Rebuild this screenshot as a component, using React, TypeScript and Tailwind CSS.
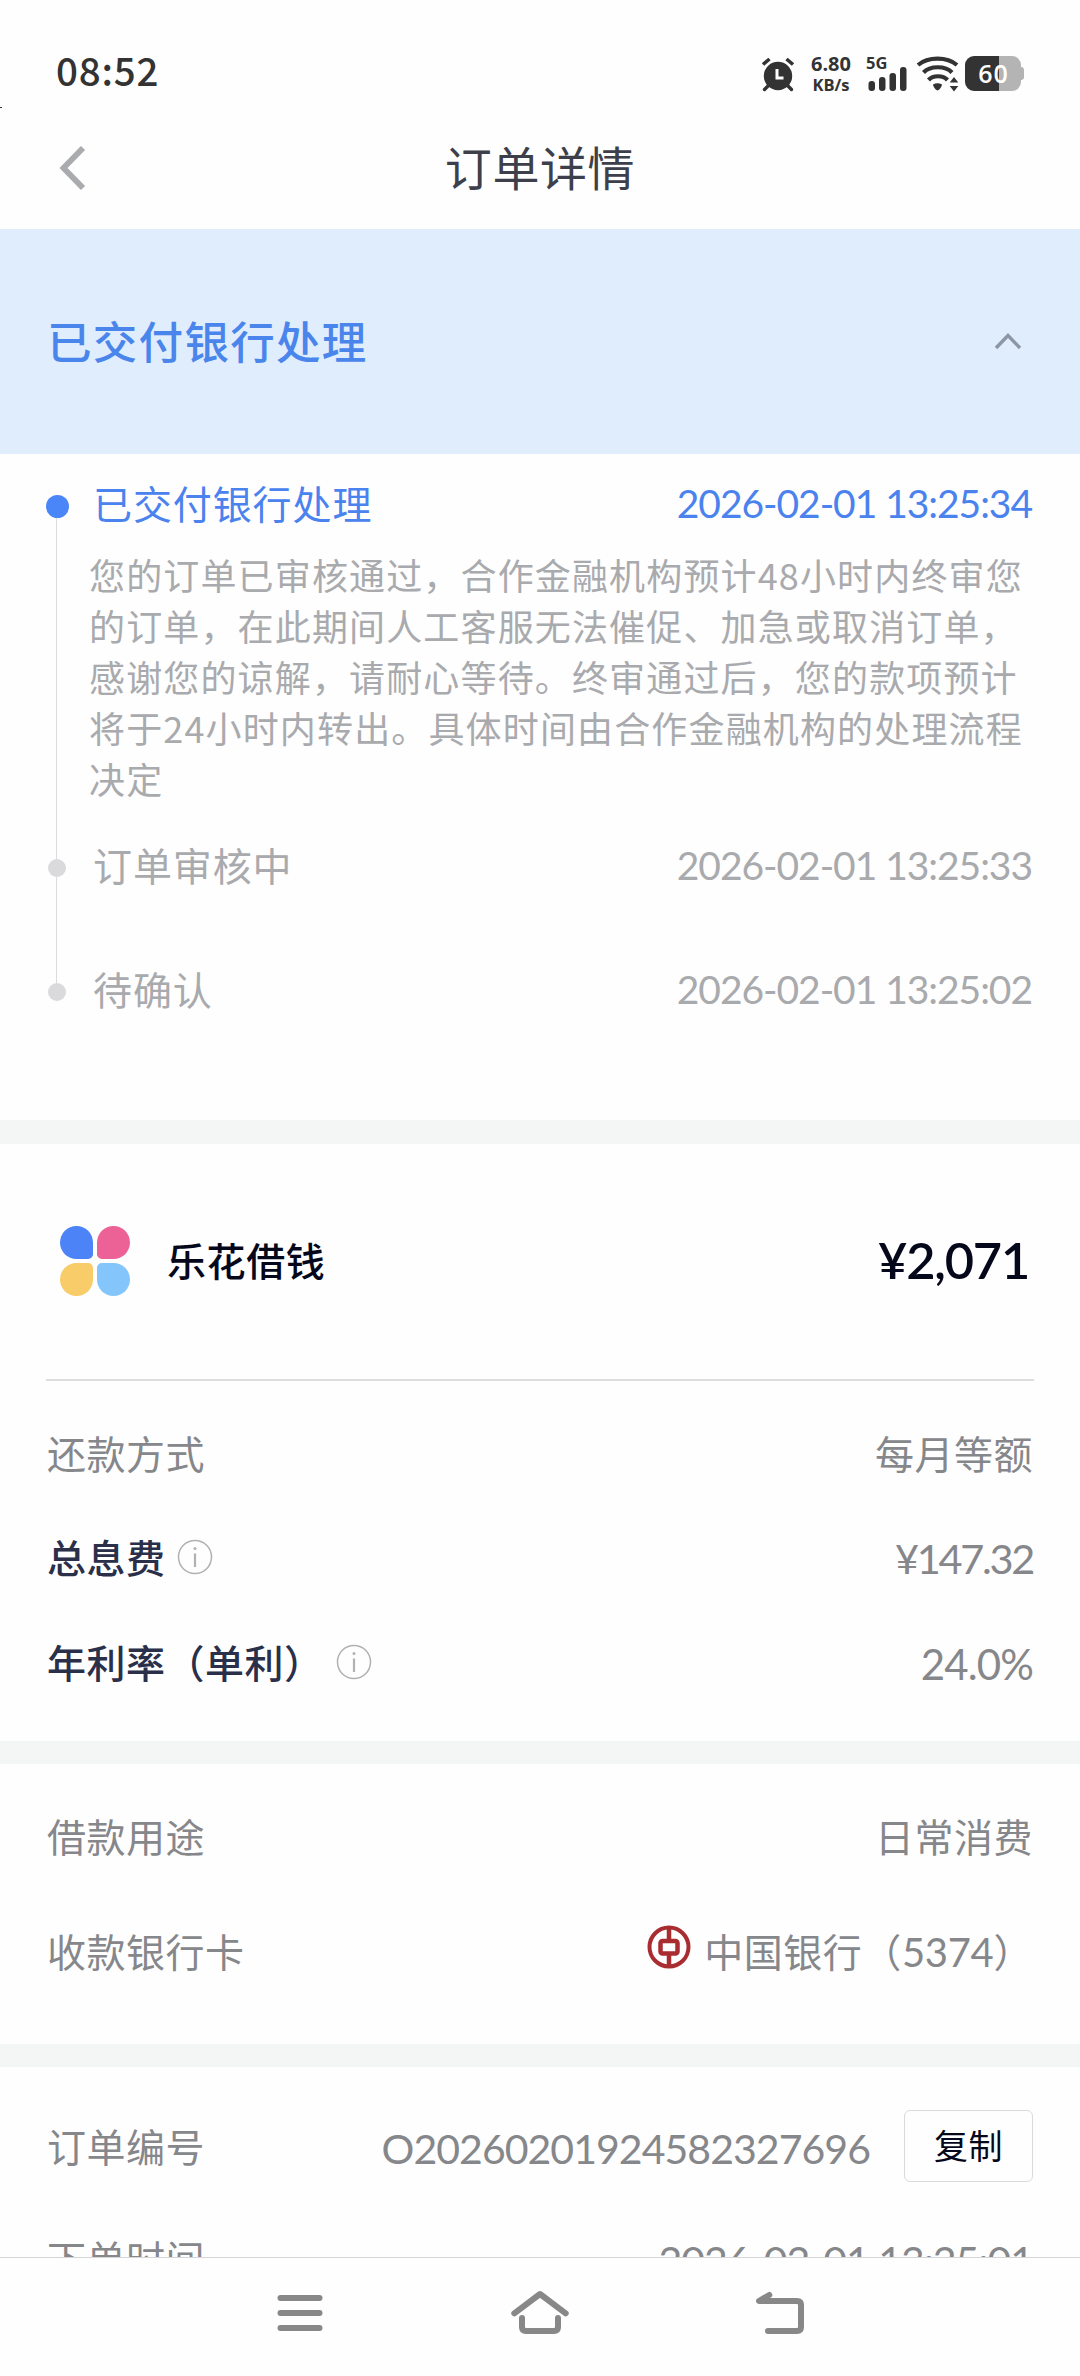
import type { ReactNode } from "react";

function AlarmIcon() {
  return (
    <svg width="34" height="36" viewBox="0 0 34 36" fill="none" stroke="#333" strokeLinecap="round">
      <circle cx="17" cy="20" r="14.2" fill="#333" stroke="none" />
      <path d="M2 8.500 8.500 3M32 8.500 25.500 3" strokeWidth="3.600" strokeLinecap="butt" />
      <path d="M7 30 3.500 33.500M27 30l3.500 3.500" strokeWidth="3.400" />
      <path d="M16 13v9h6.500" stroke="#fff" strokeWidth="3" strokeLinecap="butt" />
    </svg>
  );
}

function SignalIcon() {
  return (
    <svg width="39" height="24" viewBox="0 0 39 24" fill="#333">
      <rect x="0.500" y="14" width="6.500" height="10" rx="3" />
      <rect x="11" y="10" width="6.500" height="14" rx="3" />
      <rect x="21.500" y="6" width="6.500" height="18" rx="3" />
      <rect x="32" y="0" width="6.500" height="24" rx="3" />
    </svg>
  );
}

function WifiIcon() {
  return (
    <svg width="44" height="36" viewBox="0 0 44 36" fill="none" stroke="#333" strokeWidth="4.200">
      <path d="M2 9C12 .5 31 .5 41 9" />
      <path d="M7.500 16.500c6.500-7 22-7 28.500 0" />
      <path d="M12.500 24c4.500-5 14.500-5 19 0" />
      <path d="M17 28.500q4.500-2.500 9 0c0 2-3 6-4.500 6s-4.500-4-4.500-6z" fill="#333" stroke="none" />
      <path d="m38 21 4.300 5.500h-8.600zM38 35.500l4.300-5.500h-8.600z" fill="#333" stroke="none" />
    </svg>
  );
}

function Battery() {
  return (
    <div className="flex items-center">
      <div className="flex h-[35px] w-[56px] items-center justify-center rounded-[9px] bg-linear-to-r from-[#333] from-60% to-[#b4b4b4] to-60% pl-[1px] font-[Open_Sans] text-[25px] leading-none font-semibold tracking-[1px] text-white">
        60
      </div>
      <div className="h-[13px] w-[3px] rounded-r-[3px] bg-[#b4b4b4]" />
    </div>
  );
}

function InfoIcon() {
  return (
    <svg width="36" height="36" viewBox="0 0 36 36" fill="none" stroke="#b0b1b4" strokeWidth="1.500">
      <circle cx="18" cy="18" r="16.500" />
      <path d="M18 14.500v13.500" strokeWidth="2.200" />
      <circle cx="18" cy="9.500" r="1.500" fill="#b0b1b4" stroke="none" />
    </svg>
  );
}

function FlowerLogo() {
  return (
    <div className="grid h-[70px] w-[70px] grid-cols-2 gap-1">
      <i className="rounded-[17px] rounded-br-[5px] bg-[#4c83f6]" />
      <i className="rounded-[17px] rounded-bl-[5px] bg-[#ed6296]" />
      <i className="rounded-[17px] rounded-tr-[5px] bg-[#f8cc68]" />
      <i className="rounded-[17px] rounded-tl-[5px] bg-[#84c6fb]" />
    </div>
  );
}

function BankLogo() {
  return (
    <svg width="44" height="44" viewBox="0 0 44 44" fill="none" stroke="#a92c30">
      <circle cx="22" cy="22" r="19.500" strokeWidth="4" />
      <rect x="13.500" y="16" width="17" height="12.500" rx="2" strokeWidth="4.500" />
      <path d="M22 2v14M22 29v13" strokeWidth="4.500" />
    </svg>
  );
}

type StepProps = { title: string; time: string; active?: boolean; className: string };

function Step({ title, time, active, className }: StepProps) {
  return (
    <div className={`flex h-[60px] items-center justify-between ${active ? "text-[#4a82ee]" : "text-[#a9aaad]"} ${className}`}>
      <div className="flex items-center">
        <div className="mr-[12px] flex w-[48px] justify-center pt-1">
          <div className={active ? "size-[23px] rounded-full bg-[#4a86f7]" : "size-[18px] rounded-full bg-[#dadadc]"} />
        </div>
        <span className="pb-1 text-[39px] tracking-[0.9px]">{title}</span>
      </div>
      <span className="pb-px font-[Lato] text-[39px] tracking-[-1.050px]">{time}</span>
    </div>
  );
}

type RowProps = { label: ReactNode; children: ReactNode; className: string };

function Row({ label, children, className }: RowProps) {
  return (
    <div className={`flex h-[60px] shrink-0 items-center justify-between pr-[47px] pl-[47px] text-[39px] tracking-[0.5px] text-[#86878b] ${className}`}>
      <div className="flex items-center pb-[5px]">{label}</div>
      {children}
    </div>
  );
}

const notice = [
  "您的订单已审核通过，合作金融机构预计48小时内终审您",
  "的订单，在此期间人工客服无法催促、加急或取消订单，",
  "感谢您的谅解，请耐心等待。终审通过后，您的款项预计",
  "将于24小时内转出。具体时间由合作金融机构的处理流程",
  "决定",
];

export default function App() {
  return (
    <div className="flex h-[2376px] w-[1080px] flex-col overflow-hidden bg-[#fefefe] font-['Noto_Sans_CJK_SC',sans-serif] leading-none whitespace-nowrap">
      {/* status bar */}
      <div className="flex h-[107px] shrink-0 items-center justify-between pt-[40px] pr-[56px] pl-[56px] text-[#333]">
        <span className="pb-[9px] text-[38.500px] font-medium tracking-[0.8px]">08:52</span>
        <div className="flex items-center">
          <AlarmIcon />
          <div className="ml-[14px] flex w-[44px] flex-col items-center font-[Open_Sans] font-bold">
            <span className="text-[20px] leading-[21px]">6.80</span>
            <span className="text-[16.500px] leading-[21px]">KB/s</span>
          </div>
          <div className="ml-[13px] flex h-[35px] w-[41px] flex-col justify-between">
            <span className="font-[Open_Sans] text-[16.500px] leading-[13px] font-bold">5G</span>
            <div className="-mt-3 pl-[2px]">
              <SignalIcon />
            </div>
          </div>
          <div className="mr-[5px] ml-[9px]">
            <WifiIcon />
          </div>
          <Battery />
        </div>
      </div>
      <div className="h-px w-[2px] shrink-0 bg-[#333]" />

      {/* title bar */}
      <div className="relative flex h-[121px] shrink-0 items-center justify-center pb-[7px]">
        <svg className="absolute top-[38px] left-[58px]" width="30" height="44" viewBox="0 0 30 44" fill="none" stroke="#a9abae" strokeWidth="5.800">
          <path d="M25 2 5.500 22 25 42" />
        </svg>
        <h1 className="text-[47px] tracking-[0.6px] text-[#3d3f4a]">订单详情</h1>
      </div>

      {/* current state */}
      <div className="flex h-[225px] shrink-0 items-center justify-between bg-[#e0edfd] pr-[58px] pb-[2px] pl-[47px]">
        <h2 className="text-[44.500px] font-medium tracking-[1.300px] text-[#4a85ec]">已交付银行处理</h2>
        <svg width="28" height="18" viewBox="0 0 28 18" fill="none" stroke="#8c96a5" strokeWidth="3.400">
          <path d="M2 16 14 3.500 26 16" />
        </svg>
      </div>

      {/* timeline */}
      <div className="relative h-[666px] shrink-0 pr-[48px] pl-[33px]">
        <div className="absolute top-[60px] left-[56px] h-[478px] w-px bg-[#dcdcde]" />
        <div className="relative">
          <Step active title="已交付银行处理" time="2026-02-01 13:25:34" className="mt-[20px]" />
          <div className="mt-[15px] pl-[56px] text-[36px] leading-[51.100px] tracking-[1.150px] text-[#a9aaad]">
            {notice.map((line) => (
              <p key={line}>{line}</p>
            ))}
          </div>
          <Step title="订单审核中" time="2026-02-01 13:25:33" className="mt-[32px]" />
          <Step title="待确认" time="2026-02-01 13:25:02" className="mt-[64px]" />
        </div>
      </div>

      <div className="h-6 shrink-0 bg-[#f4f6f6]" />

      {/* product */}
      <div className="mx-[46px] flex h-[237px] shrink-0 items-center justify-between border-b-2 border-[#dddde0] pr-[5px] pb-[2px] pl-[14px] text-[#05071a]">
        <div className="flex items-center gap-[37px]">
          <FlowerLogo />
          <span className="pb-[3px] text-[39px] font-medium tracking-[0.6px]">乐花借钱</span>
        </div>
        <span className="font-[Lato] text-[50.500px] font-semibold tracking-[-1.200px]">¥2,071</span>
      </div>

      <Row className="mt-[44px]" label="还款方式">
        <span className="pb-[5px]">每月等额</span>
      </Row>
      <Row
        className="mt-[44px]"
        label={
          <div className="flex items-center gap-[11px] font-medium text-[#2a2f4a]">
            总息费
            <InfoIcon />
          </div>
        }
      >
        <span className="font-[Lato] text-[41.500px] tracking-[-2.300px]">¥147.32</span>
      </Row>
      <Row
        className="mt-[45px]"
        label={
          <div className="flex items-center gap-[12px] font-medium text-[#2a2f4a]">
            年利率（单利）
            <InfoIcon />
          </div>
        }
      >
        <span className="font-[Lato] text-[42px] tracking-[-0.9px]">24.0%</span>
      </Row>

      <div className="mt-[47px] h-[23px] shrink-0 bg-[#f4f6f6]" />

      <Row className="mt-[44px]" label="借款用途">
        <span className="pb-[5px]">日常消费</span>
      </Row>
      <Row className="mt-[55px]" label="收款银行卡">
        <div className="flex items-center">
          <div className="mr-[13px] -mt-3">
            <BankLogo />
          </div>
          <span className="pb-[4px]">
            中国银行（<span className="font-[Lato] text-[40px] tracking-[-0.3px]">5374</span>）
          </span>
        </div>
      </Row>

      <div className="mt-[61px] h-[23px] shrink-0 bg-[#f4f6f6]" />

      <Row className="mt-[51px]" label="订单编号">
        <div className="flex items-center gap-[34px]">
          <span className="font-[Lato] text-[41px] tracking-[-0.950px]">O20260201924582327696</span>
          <button className="-mt-1 h-[72px] w-[129px] rounded-md border border-[#d9dadd] pb-[3px] text-[34px] text-[#05071a]">复制</button>
        </div>
      </Row>

      {/* last row runs under the navigation bar */}
      <div className="h-[79px] shrink-0 overflow-hidden">
        <Row className="mt-[52px]" label="下单时间">
          <span className="font-[Lato] text-[41px] tracking-[-1.050px]">2026-02-01 13:25:01</span>
        </Row>
      </div>

      {/* system navigation */}
      <div className="flex h-[119px] shrink-0 border-t border-[#d6d6d6] pt-[31px] pl-[277px]">
        <svg className="mr-[188px]" width="46" height="48" viewBox="0 0 46 48" fill="none" stroke="#888" strokeWidth="6" strokeLinecap="round">
          <path d="M3.500 9h39M3.500 24h39M3.500 39h39" />
        </svg>
        <svg className="mr-[187px]" width="58" height="48" viewBox="0 0 58 48" fill="none" stroke="#888" strokeWidth="6" strokeLinecap="round" strokeLinejoin="round">
          <path d="M3.300 24.300 29 5l25.700 19.300M11 29v9q0 4 4 4h28q4 0 4-4v-9" />
        </svg>
        <svg width="50" height="48" viewBox="0 0 50 48" fill="none" stroke="#888" strokeWidth="6" strokeLinecap="round" strokeLinejoin="round">
          <path d="M13.300 6 3 12h38q4 0 4 4v22q0 4-4 4H12" />
        </svg>
      </div>
    </div>
  );
}
